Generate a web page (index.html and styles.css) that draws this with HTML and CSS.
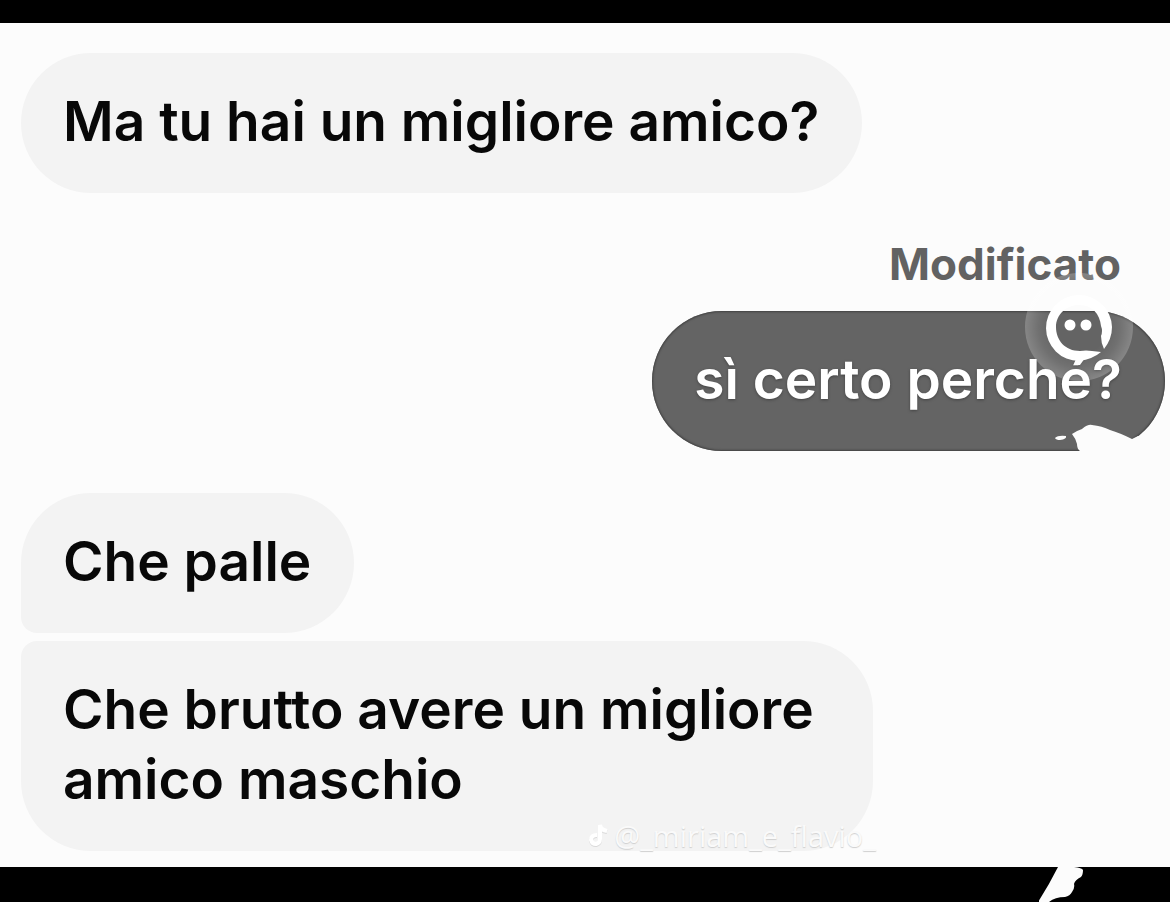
FILE: index.html
```
<!DOCTYPE html>
<html lang="it">
<head>
<meta charset="utf-8">
<meta name="viewport" content="width=device-width, initial-scale=1">
<title>Chat</title>
<link rel="stylesheet" href="styles.css">
</head>
<body>
<div class="bar bar-top"></div>
<main class="chat">
  <p class="bubble received">Ma tu hai un migliore amico?</p>
  <section class="sent-group">
    <span class="edited">Modificato</span>
    <p class="bubble sent">sì certo perché?
      <svg class="notch" width="120" height="35" viewBox="0 0 120 35" aria-hidden="true">
        <path fill="#fcfcfc" d="M22 13Q26 10 32 8Q38 3 42 4Q52 5 60 9Q70 12 82 18L88 15L120 23V35H28L30 30Q27 28 27 23Q26 18 22 13Z"/>
        <path fill="#fcfcfc" d="M5 17Q8 14 16 15Q17 18 10 19Q6 19 5 17Z"/>
      </svg>
      <svg class="badge" width="108" height="108" viewBox="0 0 108 108" aria-hidden="true">
        <defs>
          <radialGradient id="halo">
            <stop offset="0.5" stop-color="#fff" stop-opacity="0"/>
            <stop offset="0.75" stop-color="#fff" stop-opacity="0.08"/>
            <stop offset="1" stop-color="#fff" stop-opacity="0.22"/>
          </radialGradient>
        </defs>
        <circle cx="54" cy="54" r="54" fill="url(#halo)"/>
        <path fill="#fff" d="M79 76Q87 66 87 54A33 33 0 1 0 54 88Q68 86 76 79L67 78Q61 77 55 78C40 78 31 67 31 54C31 42 41 32 54 32C67 32 75 41 76 53Q78 58 76 63Q76 70 79 76Z"/>
        <path fill="#fff" d="M50 92L53 85H60L55 92Z"/>
        <circle cx="45" cy="52" r="5.5" fill="#fff"/>
        <circle cx="61" cy="52" r="5.5" fill="#fff"/>
      </svg>
    </p>
  </section>
  <p class="bubble received group-first">Che palle</p>
  <p class="bubble received group-last">Che brutto avere un migliore amico maschio</p>
  <div class="watermark">
    <svg width="20" height="24" viewBox="0 0 20 24" aria-hidden="true">
      <path fill="none" stroke="#d9d9d9" stroke-width="4" d="M9 12Q3 12 3 17Q4 21 8 21Q12 20 12 16V2Q13 7 19 8"/>
      <path fill="none" stroke="#fff" stroke-width="4" d="M9 11Q3 11 3 16Q4 20 8 20Q12 19 12 15V1Q13 6 19 7"/>
    </svg>
    <span>@_miriam_e_flavio_</span>
  </div>
</main>
<div class="bar bar-bottom">
  <svg class="splash" width="50" height="35" viewBox="0 0 50 35" aria-hidden="true">
    <path fill="#fcfcfc" d="M19 0L35 0Q43 1 44 3Q44 8 42 10Q36 13 35 17Q36 21 33 25Q31 29 26 30Q16 30 10 35H-1Q10 18 19 0Z"/>
  </svg>
</div>
</body>
</html>
```
FILE: styles.css
```
* { box-sizing: border-box; }

body {
  margin: 0;
  min-height: 100vh;
  display: flex;
  flex-direction: column;
  background: #fcfcfc;
  font-family: Inter, "Liberation Sans", sans-serif;
}

.bar { background: #000; }
.bar-top { height: 23px; }
.bar-bottom { position: relative; height: 35px; }

.splash {
  position: absolute;
  top: 0;
  right: 81px;
}

.chat {
  position: relative;
  flex: 1;
  display: flex;
  flex-direction: column;
  align-items: flex-start;
  padding: 30px 5px 16px 21px;
}

.bubble {
  margin: 0;
  max-width: 852px;
  padding: 33px 43px 37px 42px;
  border-radius: 70px;
  font-size: 55px;
  line-height: 70px;
  font-weight: 600;
}

.received {
  background: #f3f3f3;
  color: #080808;
}

.sent-group {
  align-self: flex-end;
  display: flex;
  flex-direction: column;
  align-items: flex-end;
  margin: 46px 0 42px;
}

.edited {
  margin-right: 44px;
  padding-bottom: 22px;
  font-size: 44px;
  line-height: 50px;
  font-weight: 700;
  color: #626262;
}

.sent {
  position: relative;
  background: #646464;
  box-shadow: inset 0 0 2px 1px #424242;
  color: #fff;
  text-shadow: 0 1px 3px #424242;
}

.notch {
  position: absolute;
  right: -5px;
  bottom: -5px;
}

.badge {
  position: absolute;
  right: 32px;
  top: -38px;
}

.group-first {
  margin-bottom: 8px;
  border-bottom-left-radius: 16px;
}

.group-last { border-top-left-radius: 16px; }

.watermark {
  position: absolute;
  right: 294px;
  bottom: 13px;
  display: flex;
  align-items: center;
  gap: 6px;
  font-family: "Open Sans", sans-serif;
  font-size: 29px;
  line-height: 36px;
  color: #fafafa;
  text-shadow: 0 1px 1px #cfcfcf;
}
```
